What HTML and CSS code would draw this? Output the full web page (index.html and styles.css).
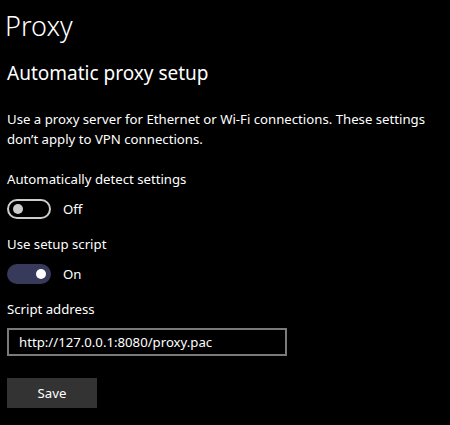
FILE: index.html
```html
<!DOCTYPE html>
<html>
<head>
<meta charset="utf-8">
<link rel="stylesheet" href="styles.css">
</head>
<body>
<main class="page">
  <h1 class="title">Proxy</h1>
  <h2 class="subtitle">Automatic proxy setup</h2>
  <p class="desc">Use a proxy server for Ethernet or Wi-Fi connections. These settings don’t apply to VPN connections.</p>

  <div class="setting setting-first">
    <div class="label">Automatically detect settings</div>
    <div class="toggle-row">
      <span class="toggle toggle-off"><span class="knob"></span></span>
      <span class="state">Off</span>
    </div>
  </div>

  <div class="setting">
    <div class="label">Use setup script</div>
    <div class="toggle-row">
      <span class="toggle toggle-on"><span class="knob"></span></span>
      <span class="state">On</span>
    </div>
  </div>

  <div class="setting setting-last">
    <div class="label">Script address</div>
    <div class="textbox">http://127.0.0.1:8080/proxy.pac</div>
  </div>

  <button class="btn">Save</button>
</main>
</body>
</html>
```

FILE: styles.css
```css
html, body {
  margin: 0;
  padding: 0;
  background: #000;
}
body {
  width: 450px;
  height: 425px;
  overflow: hidden;
  color: #fff;
  font-family: "Noto Sans", "Open Sans", sans-serif;
}
.page {
  padding: 0 0 0 7px;
  display: flex;
  flex-direction: column;
  align-items: flex-start;
}
.title {
  margin: 7px 0 0 -2px;
  font-size: 27px;
  font-weight: 300;
  line-height: 38px;
}
.subtitle {
  margin: 15px 0 0 0;
  font-size: 19px;
  font-weight: 400;
  line-height: 26px;
}
.desc {
  margin: 23px 0 0 0;
  width: 430px;
  font-size: 13.2px;
  line-height: 20px;
}
.setting {
  margin-top: 15px;
}
.setting-first {
  margin-top: 20px;
}
.setting-last {
  margin-top: 15px;
}
.label {
  font-size: 13.2px;
  line-height: 20px;
}
.toggle-row {
  display: flex;
  align-items: center;
  gap: 12px;
  margin-top: 10px;
}
.toggle {
  box-sizing: border-box;
  width: 44px;
  height: 20px;
  border-radius: 10px;
  display: flex;
  align-items: center;
  padding: 0 5px;
}
.toggle-off {
  border: 2px solid #cccccc;
  justify-content: flex-start;
}
.toggle-on {
  background: #373a5a;
  justify-content: flex-end;
}
.knob {
  width: 10px;
  height: 10px;
  border-radius: 50%;
  background: #fff;
}
.toggle-off .knob {
  background: #cccccc;
  margin-left: -1px;
}
.state {
  font-size: 13.2px;
  line-height: 20px;
}
.textbox {
  box-sizing: border-box;
  margin-top: 9px;
  width: 280px;
  height: 28px;
  border: 2px solid #7a7a7a;
  padding: 0 10px;
  font-size: 13.2px;
  line-height: 24px;
}
.btn {
  margin-top: 22px;
  width: 90px;
  height: 30px;
  border: none;
  background: #333333;
  color: #fff;
  font-family: inherit;
  font-size: 13.2px;
  padding: 0;
}
```
